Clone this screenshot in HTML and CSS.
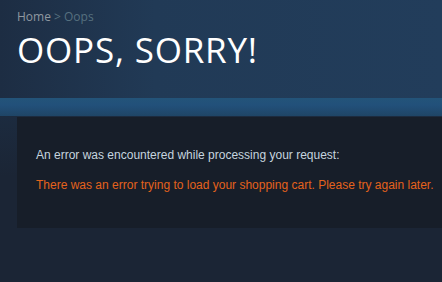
FILE: index.html
```html
<!DOCTYPE html>
<html>
<head>
<meta charset="utf-8">
<link rel="stylesheet" href="styles.css">
</head>
<body>
<div class="page">
  <header class="page-header">
    <div class="breadcrumbs"><a class="crumb-home">Home</a> &gt; <span class="crumb-current">Oops</span></div>
    <h1 class="page-title">OOPS, SORRY!</h1>
  </header>
  <div class="band"></div>
  <main class="content">
    <div class="error-panel">
      <p class="error-intro">An error was encountered while processing your request:</p>
      <p class="error-detail">There was an error trying to load your shopping cart. Please try again later.</p>
    </div>
  </main>
</div>
</body>
</html>
```

FILE: styles.css
```css
html, body {
  margin: 0;
  padding: 0;
  height: 100%;
}
body {
  background: #1b2535;
  overflow: hidden;
}
.page {
  display: flex;
  flex-direction: column;
  min-height: 100%;
}
.page-header {
  height: 98px;
  box-sizing: border-box;
  padding: 8px 17px 0;
  background: linear-gradient(to right, #1d2d43 0%, #213a56 35%, #223d5b 100%);
}
.breadcrumbs {
  font-family: "Open Sans", sans-serif;
  font-size: 12px;
  line-height: 18px;
  color: #56707f;
}
.crumb-home {
  color: #8f98a0;
}
.crumb-current {
  color: #56707f;
}
.page-title {
  margin: 4px 0 0;
  font-family: "Open Sans", sans-serif;
  font-weight: 400;
  font-size: 35px;
  line-height: 40px;
  color: #ffffff;
  letter-spacing: 0.8px;
}
.band {
  height: 18px;
  background: linear-gradient(to bottom, #235479 0%, #22507a 40%, #1f4566 100%);
}
.content {
  flex: 1;
  padding: 1px 0 0 17px;
  background: linear-gradient(to bottom, #1c2b3f 0px, #1b2535 60px, #1b2535 100%);
}
.error-panel {
  height: 111px;
  box-sizing: border-box;
  padding: 31px 0 0 19px;
  background: #171e29;
  font-family: "Liberation Sans", Arial, sans-serif;
  font-size: 12px;
  line-height: 14px;
  white-space: nowrap;
  overflow: hidden;
}
.error-intro {
  margin: 0;
  color: #c6d4df;
}
.error-detail {
  margin: 16px 0 0;
  color: #e4621c;
}
```
